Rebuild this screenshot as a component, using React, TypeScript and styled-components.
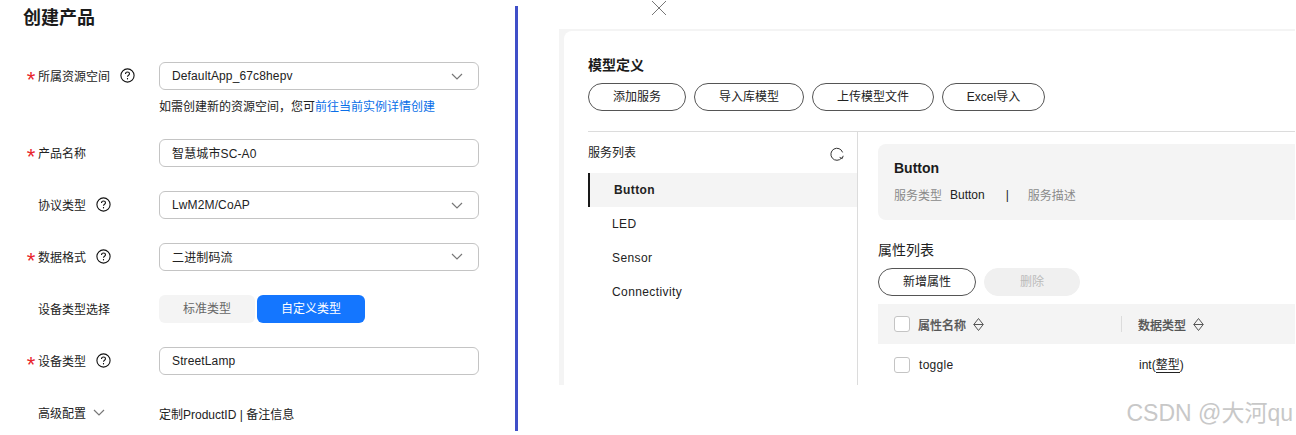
import styled, { createGlobalStyle } from "styled-components";

const GlobalStyle = createGlobalStyle`
  html, body {
    margin: 0;
    padding: 0;
    background: #fff;
    height: 435px;
    overflow: hidden;
  }
  body {
    font-family: "Liberation Sans", "Noto Sans CJK SC", sans-serif;
    font-size: 12px;
    color: #222;
  }
`;

const HelpIcon = () => (
  <svg width="15" height="15" viewBox="0 0 15 15" fill="none" stroke="#111" strokeWidth="1.1">
    <circle cx="7.5" cy="7.5" r="6.6" />
    <path d="M5.5 6c0-1.2.9-2 2-2s2 .8 2 1.8c0 1.4-2 1.4-2 2.9" />
    <path d="M7.5 10v1.4" />
  </svg>
);

const Chevron = () => (
  <svg width="12" height="7" viewBox="0 0 12 7" fill="none" stroke="#777" strokeWidth="1.2">
    <path d="M1 1l5 5 5-5" />
  </svg>
);

const SortIcon = () => (
  <svg width="11" height="15" viewBox="0 0 11 15" fill="none" stroke="#555" strokeWidth="1">
    <path d="M.8 7.5L5.5 1.5l4.7 6-4.7 6z" />
    <path d="M.8 7.5h9.4" />
  </svg>
);

const RefreshIcon = () => (
  <svg width="16" height="16" viewBox="0 0 16 16" fill="none" stroke="#333" strokeWidth="1">
    <path d="M13.6 6.4A6 6 0 1 0 12.6 12" />
    <path d="M10.6 11.4l2.6 1.2 1-2.8" />
  </svg>
);

const CloseIcon = () => (
  <svg width="16" height="16" viewBox="0 0 16 16" fill="none" stroke="#777" strokeWidth="1">
    <path d="M1 1l14 14M15 1L1 15" />
  </svg>
);

const Field = ({
  label,
  required,
  help,
  folded,
  children,
}: {
  label: string;
  required?: boolean;
  help?: boolean;
  folded?: boolean;
  children: React.ReactNode;
}) => (
  <Row>
    <LabelBox>
      {required && <Star>*</Star>}
      <span>{label}</span>
      {help && <HelpWrap><HelpIcon /></HelpWrap>}
      {folded && <FoldWrap><Chevron /></FoldWrap>}
    </LabelBox>
    {children}
  </Row>
);

export default function App() {
  return (
    <Page>
      <GlobalStyle />
      <FormSide>
        <Title>创建产品</Title>
        <Field label="所属资源空间" required help>
          <Select><span>DefaultApp_67c8hepv</span><Chevron /></Select>
        </Field>
        <Hint>如需创建新的资源空间，您可<HintLink>前往当前实例详情创建</HintLink></Hint>
        <Field label="产品名称" required>
          <Select $raised><span>智慧城市SC-A0</span></Select>
        </Field>
        <Field label="协议类型" help>
          <Select><span>LwM2M/CoAP</span><Chevron /></Select>
        </Field>
        <Field label="数据格式" required help>
          <Select $raised><span>二进制码流</span><Chevron /></Select>
        </Field>
        <Field label="设备类型选择">
          <Segments>
            <Segment $width={96}>标准类型</Segment>
            <Segment $width={108} $active>自定义类型</Segment>
          </Segments>
        </Field>
        <Field label="设备类型" required help>
          <Select><span>StreetLamp</span></Select>
        </Field>
        <Field label="高级配置" folded>
          <span>定制ProductID | 备注信息</span>
        </Field>
      </FormSide>
      <Divider />
      <ModelSide>
        <CloseBar><CloseIcon /></CloseBar>
        <Panel>
          <Card>
            <Heading>模型定义</Heading>
            <Toolbar>
              <PillButton $width={98}>添加服务</PillButton>
              <PillButton $width={110}>导入库模型</PillButton>
              <PillButton $width={122}>上传模型文件</PillButton>
              <PillButton $width={103}>Excel导入</PillButton>
            </Toolbar>
            <Columns>
              <ServiceList>
                <ListHead>
                  <span>服务列表</span>
                  <RefreshIcon />
                </ListHead>
                <ServiceItem $active>Button</ServiceItem>
                <ServiceItem>LED</ServiceItem>
                <ServiceItem>Sensor</ServiceItem>
                <ServiceItem>Connectivity</ServiceItem>
              </ServiceList>
              <Detail>
                <InfoCard>
                  <InfoTitle>Button</InfoTitle>
                  <InfoLine>
                    <Muted>服务类型</Muted>
                    <span>Button</span>
                    <Sep>|</Sep>
                    <Muted>服务描述</Muted>
                  </InfoLine>
                </InfoCard>
                <SubHeading>属性列表</SubHeading>
                <Toolbar>
                  <PillButton $width={98}>新增属性</PillButton>
                  <PillButton $width={96} $disabled>删除</PillButton>
                </Toolbar>
                <TableHead>
                  <NameCell>
                    <Check />
                    <HeadText>属性名称</HeadText>
                    <SortIcon />
                  </NameCell>
                  <TypeCell>
                    <HeadText>数据类型</HeadText>
                    <SortIcon />
                  </TypeCell>
                </TableHead>
                <TableRow>
                  <NameCell>
                    <Check />
                    <RowText>toggle</RowText>
                  </NameCell>
                  <TypeCell>
                    <TypeText>int(<TypeLink>整型</TypeLink>)</TypeText>
                  </TypeCell>
                </TableRow>
              </Detail>
            </Columns>
          </Card>
        </Panel>
      </ModelSide>
      <Watermark>CSDN @大河qu</Watermark>
    </Page>
  );
}

const Page = styled.div`
  position: relative;
  display: flex;
  width: 1296px;
  height: 435px;
  overflow: hidden;
`;

const FormSide = styled.section`
  width: 515px;
  flex: none;
  padding-left: 26px;
  box-sizing: border-box;
`;

const Title = styled.h1`
  margin: 0 0 26px -3px;
  height: 36px;
  line-height: 36px;
  font-size: 18px;
  font-weight: 700;
  color: #1b1b1b;
`;

const Row = styled.div`
  display: flex;
  align-items: center;
  height: 28px;
  margin-bottom: 24px;
`;

const LabelBox = styled.label`
  position: relative;
  display: flex;
  align-items: center;
  width: 133px;
  padding: 0 0 2px 12px;
  box-sizing: border-box;
  flex: none;
`;

const Star = styled.span`
  position: absolute;
  left: 0;
  top: 2px;
  width: 10px;
  text-align: center;
  color: #e8262d;
  font-size: 22px;
  line-height: 22px;
`;

const HelpWrap = styled.span`
  display: flex;
  margin-left: 10px;
`;

const FoldWrap = styled.span`
  display: flex;
  margin: 1px 0 0 7px;
`;

const Select = styled.div<{ $raised?: boolean }>`
  display: flex;
  align-items: center;
  justify-content: space-between;
  width: 320px;
  height: 28px;
  padding: 0 15px ${(p) => (p.$raised ? "2px" : "0")} 12px;
  box-sizing: border-box;
  border: 1px solid #c4c4c4;
  border-radius: 6px;
  letter-spacing: 0.13px;
`;

const Hint = styled.div`
  margin: -24px 0 0 133px;
  height: 49px;
  padding-top: 9px;
  box-sizing: border-box;
  line-height: 16px;
`;

const HintLink = styled.span`
  color: #0a6fe8;
`;

const Segments = styled.div`
  display: flex;
  gap: 2px;
`;

const Segment = styled.div<{ $width: number; $active?: boolean }>`
  width: ${(p) => p.$width}px;
  height: 28px;
  line-height: 28px;
  text-align: center;
  border-radius: 6px;
  background: ${(p) => (p.$active ? "#1476ff" : "#f4f4f4")};
  color: ${(p) => (p.$active ? "#fff" : "#666")};
`;

const Divider = styled.div`
  width: 3px;
  height: 425px;
  margin-top: 6px;
  flex: none;
  background: #3f4fc8;
`;

const ModelSide = styled.section`
  flex: 1;
  min-width: 0;
  padding: 0 1px 0 41px;
`;

const CloseBar = styled.div`
  height: 29px;
  padding-left: 92px;
  & > svg {
    display: block;
  }
`;

const Panel = styled.div`
  height: 356px;
  padding: 2px 0 0 5px;
  box-sizing: border-box;
  background: #f4f4f4;
  overflow: hidden;
`;

const Card = styled.div`
  height: 100%;
  padding: 24px 0 0 24px;
  box-sizing: border-box;
  background: #fff;
  border-radius: 8px 0 0 0;
`;

const Heading = styled.div`
  height: 20px;
  margin-bottom: 8px;
  line-height: 20px;
  font-size: 14px;
  font-weight: 700;
  color: #1b1b1b;
`;

const Toolbar = styled.div`
  display: flex;
  gap: 8px;
`;

const PillButton = styled.div<{ $width: number; $disabled?: boolean }>`
  width: ${(p) => p.$width}px;
  height: 28px;
  box-sizing: border-box;
  line-height: 26px;
  text-align: center;
  border-radius: 14px;
  border: 1px solid ${(p) => (p.$disabled ? "#f0f0f0" : "#555")};
  background: ${(p) => (p.$disabled ? "#f0f0f0" : "#fff")};
  color: ${(p) => (p.$disabled ? "#bbb" : "#222")};
`;

const Columns = styled.div`
  display: flex;
  margin-top: 20px;
  height: 300px;
  border-top: 1px solid #dcdcdc;
`;

const ServiceList = styled.div`
  width: 270px;
  flex: none;
  box-sizing: border-box;
  border-right: 1px solid #dcdcdc;
`;

const ListHead = styled.div`
  display: flex;
  align-items: center;
  justify-content: space-between;
  height: 41px;
  padding: 0 12px 2px 0;
  box-sizing: border-box;
  & > svg {
    margin-top: 5px;
  }
`;

const ServiceItem = styled.div<{ $active?: boolean }>`
  height: 34px;
  line-height: 34px;
  padding-left: ${(p) => (p.$active ? "24px" : "22px")};
  border-left: 2px solid ${(p) => (p.$active ? "#191919" : "transparent")};
  background: ${(p) => (p.$active ? "#f4f4f4" : "transparent")};
  font-weight: ${(p) => (p.$active ? 700 : 400)};
  letter-spacing: 0.4px;
`;

const Detail = styled.div`
  flex: 1;
  min-width: 0;
  padding: 12px 0 0 20px;
`;

const InfoCard = styled.div`
  height: 76px;
  padding: 14px 16px;
  box-sizing: border-box;
  background: #f4f4f4;
  border-radius: 8px 0 0 8px;
`;

const InfoTitle = styled.div`
  height: 20px;
  line-height: 20px;
  font-size: 14px;
  font-weight: 700;
  color: #1b1b1b;
`;

const InfoLine = styled.div`
  display: flex;
  align-items: center;
  gap: 8px;
  margin-top: 8px;
`;

const Muted = styled.span`
  color: #8a8a8a;
`;

const Sep = styled.span`
  margin: 0 11px 0 13px;
`;

const SubHeading = styled.div`
  height: 20px;
  margin: 20px 0 8px;
  line-height: 20px;
  font-size: 14px;
`;

const TableHead = styled.div`
  display: flex;
  align-items: center;
  height: 40px;
  margin-top: 8px;
  background: #f4f4f4;
`;

const TableRow = styled.div`
  display: flex;
  align-items: center;
  height: 42px;
`;

const NameCell = styled.div`
  display: flex;
  align-items: center;
  gap: 7px;
  width: 243px;
  flex: none;
  padding-left: 16px;
  box-sizing: border-box;
`;

const TypeCell = styled.div`
  display: flex;
  align-items: center;
  gap: 7px;
  padding-left: 16px;
  height: 16px;
  border-left: 1px solid #dcdcdc;
  ${TableRow} & {
    border-left-color: transparent;
    padding-left: 17px;
  }
`;

const Check = styled.span`
  width: 16px;
  height: 16px;
  margin-right: 1px;
  box-sizing: border-box;
  border: 1px solid #c4c4c4;
  border-radius: 3px;
  background: #fff;
`;

const HeadText = styled.span`
  font-weight: 500;
  color: #555;
  -webkit-text-stroke: 0.2px #555;
`;

const RowText = styled.span`
  margin-left: 1px;
  letter-spacing: 0.3px;
`;

const TypeText = styled.span`
  margin-top: -4px;
`;

const TypeLink = styled.span`
  border-bottom: 1px solid #222;
`;

const Watermark = styled.div`
  position: absolute;
  right: 3px;
  top: 399px;
  font-size: 23px;
  line-height: 28px;
  color: #c8c8c8;
`;
